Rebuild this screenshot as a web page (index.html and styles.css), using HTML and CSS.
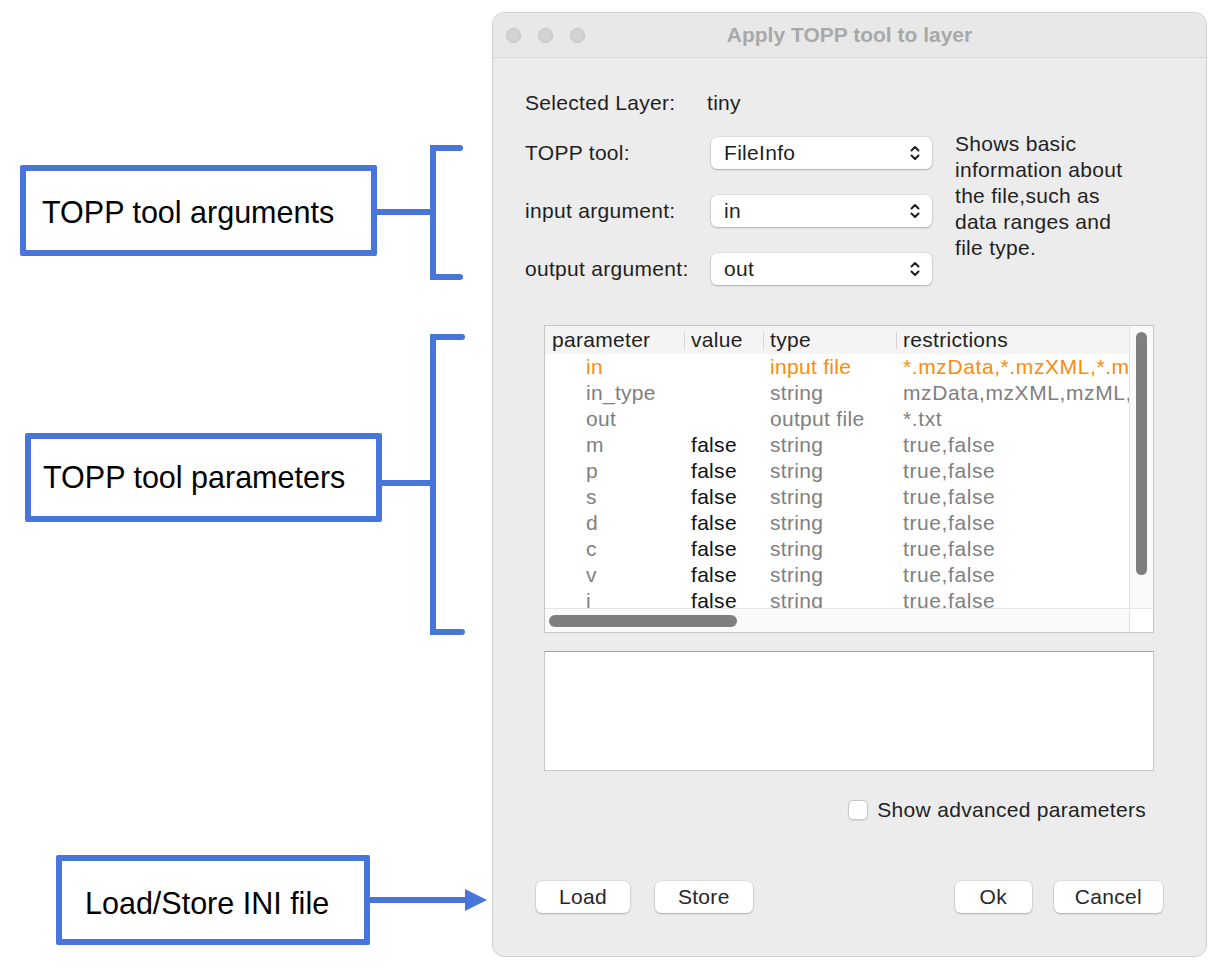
FILE: index.html
```html
<!DOCTYPE html>
<html lang="en">
<head>
<meta charset="utf-8">
<title>Apply TOPP tool to layer</title>
<link rel="stylesheet" href="styles.css">
</head>
<body>
<div class="page">
  <aside class="notes">
    <svg class="leaders" width="492" height="978" viewBox="0 0 492 978" fill="none" stroke="#4775da" stroke-width="6" stroke-linecap="round">
      <path d="M377 212H433M460 148H433V277H460"/>
      <path d="M382 483H433M462 337H433V632H462"/>
      <path d="M370 900H468"/>
      <path d="M465 889L487 900L465 911Z" fill="#4775da" stroke="none"/>
    </svg>
    <div class="note note-args">TOPP tool arguments</div>
    <div class="note note-params">TOPP tool parameters</div>
    <div class="note note-ini">Load/Store INI file</div>
  </aside>

  <section class="dialog">
    <header class="titlebar">
      <div class="lights"><span></span><span></span><span></span></div>
      <h1>Apply TOPP tool to layer</h1>
      <div></div>
    </header>

    <div class="content">
      <div class="layer-row"><span class="lbl">Selected Layer:</span><span>tiny</span></div>

      <div class="tool-grid">
        <span class="lbl">TOPP tool:</span>
        <div class="combo"><span>FileInfo</span><svg class="updown" width="10" height="18" viewBox="0 0 10 18"><path d="M1.5 6.5L5 3L8.5 6.5M1.5 11.5L5 15L8.5 11.5"/></svg></div>
        <span class="lbl">input argument:</span>
        <div class="combo"><span>in</span><svg class="updown" width="10" height="18" viewBox="0 0 10 18"><path d="M1.5 6.5L5 3L8.5 6.5M1.5 11.5L5 15L8.5 11.5"/></svg></div>
        <span class="lbl">output argument:</span>
        <div class="combo"><span>out</span><svg class="updown" width="10" height="18" viewBox="0 0 10 18"><path d="M1.5 6.5L5 3L8.5 6.5M1.5 11.5L5 15L8.5 11.5"/></svg></div>
        <p class="desc">Shows basic<br>information about<br>the file,such as<br>data ranges and<br>file type.</p>
      </div>

      <div class="params">
        <div class="params-view">
          <table>
            <colgroup><col class="c-param"><col class="c-value"><col class="c-type"><col class="c-restr"></colgroup>
            <thead>
              <tr><th>parameter</th><th class="sep">value</th><th class="sep">type</th><th class="sep">restrictions</th></tr>
            </thead>
            <tbody>
              <tr class="req"><td class="name">in</td><td></td><td>input file</td><td class="restr">*.mzData,*.mzXML,*.mzML,*.dta,*.dta2d,*.mgf</td></tr>
              <tr><td class="name">in_type</td><td></td><td>string</td><td class="restr">mzData,mzXML,mzML,dta,dta2d,mgf</td></tr>
              <tr><td class="name">out</td><td></td><td>output file</td><td class="restr">*.txt</td></tr>
              <tr><td class="name">m</td><td class="val">false</td><td>string</td><td class="restr">true,false</td></tr>
              <tr><td class="name">p</td><td class="val">false</td><td>string</td><td class="restr">true,false</td></tr>
              <tr><td class="name">s</td><td class="val">false</td><td>string</td><td class="restr">true,false</td></tr>
              <tr><td class="name">d</td><td class="val">false</td><td>string</td><td class="restr">true,false</td></tr>
              <tr><td class="name">c</td><td class="val">false</td><td>string</td><td class="restr">true,false</td></tr>
              <tr><td class="name">v</td><td class="val">false</td><td>string</td><td class="restr">true,false</td></tr>
              <tr><td class="name">i</td><td class="val">false</td><td>string</td><td class="restr">true,false</td></tr>
            </tbody>
          </table>
        </div>
        <div class="vscroll"><div class="thumb v"></div></div>
        <div class="hscroll"><div class="thumb h"></div></div>
        <div class="corner"></div>
      </div>

      <div class="docbox"></div>

      <label class="adv"><span class="check"></span>Show advanced parameters</label>

      <div class="buttons">
        <div class="group">
          <button class="btn">Load</button>
          <button class="btn">Store</button>
        </div>
        <div class="group right">
          <button class="btn">Ok</button>
          <button class="btn">Cancel</button>
        </div>
      </div>
    </div>
  </section>
</div>
</body>
</html>
```

FILE: styles.css
```css
* { box-sizing: border-box; }

html, body {
  margin: 0;
  background: #ffffff;
}

body {
  width: 1228px;
  height: 978px;
  overflow: hidden;
  font-family: "Liberation Sans", Arial, Helvetica, sans-serif;
}

.page {
  display: flex;
  align-items: flex-start;
}

/* ---- callouts on the left ---- */
.notes {
  position: relative;
  flex: none;
  width: 492px;
  height: 978px;
}

.leaders {
  position: absolute;
  left: 0;
  top: 0;
}

.note {
  position: absolute;
  display: flex;
  align-items: center;
  border: 6px solid #4775da;
  border-radius: 2px;
  background: #ffffff;
  color: #000000;
  font-size: 30.5px;
  white-space: nowrap;
}

.note-args   { left: 20px; top: 165px; width: 357px; height: 91px; padding: 3px 0 0 16px; }
.note-params { left: 25px; top: 433px; width: 357px; height: 89px; padding: 0 0 0 12px; }
.note-ini    { left: 56px; top: 855px; width: 314px; height: 90px; padding: 6px 0 0 23px; }

/* ---- dialog window ---- */
.dialog {
  flex: none;
  width: 715px;
  height: 945px;
  margin-top: 12px;
  display: flex;
  flex-direction: column;
  background: #ececec;
  border: 1px solid #cfcfcf;
  border-radius: 12px;
  overflow: hidden;
  color: #1f1f1f;
  font-size: 21px;
  letter-spacing: 0.3px;
}

.titlebar {
  flex: none;
  height: 45px;
  display: grid;
  grid-template-columns: 1fr auto 1fr;
  align-items: center;
  background: #e8e8e8;
  border-bottom: 1px solid #d6d6d6;
}

.lights {
  display: flex;
  gap: 17px;
  padding-left: 13px;
}

.lights span {
  width: 15px;
  height: 15px;
  border-radius: 50%;
  background: #d3d3d3;
  border: 1px solid #c2c2c2;
}

.titlebar h1 {
  margin: 0;
  font-size: 21px;
  font-weight: bold;
  color: #a9a9a9;
  letter-spacing: 0;
}

.content {
  flex: 1;
  display: flex;
  flex-direction: column;
  padding-top: 29px;
}

.layer-row {
  display: flex;
  align-items: center;
  height: 32px;
  margin-left: 32px;
}

.layer-row .lbl { width: 182px; }

.tool-grid {
  display: grid;
  grid-template-columns: 186px 221px 1fr;
  grid-template-rows: repeat(3, 32px);
  row-gap: 26px;
  margin: 18px 0 0 32px;
  align-items: center;
}

.tool-grid .lbl { grid-column: 1; }

.combo {
  grid-column: 2;
  height: 32px;
  display: flex;
  align-items: center;
  justify-content: space-between;
  padding: 0 12px 0 13px;
  background: #ffffff;
  border-radius: 6px;
  box-shadow: 0 0 0 0.5px rgba(0, 0, 0, 0.12), 0 1px 2px rgba(0, 0, 0, 0.22);
}

.updown path {
  fill: none;
  stroke: #1e1e1e;
  stroke-width: 2;
  stroke-linecap: round;
  stroke-linejoin: round;
}

.desc {
  grid-column: 3;
  grid-row: 1 / 4;
  align-self: start;
  margin: -6px 0 0 23px;
  line-height: 26px;
  white-space: nowrap;
}

/* ---- parameter table ---- */
.params {
  margin: 40px 0 0 51px;
  width: 610px;
  height: 308px;
  flex: none;
  display: grid;
  grid-template-columns: 1fr 24px;
  grid-template-rows: 1fr 24px;
  background: #ffffff;
  border: 1px solid #c6c6c6;
}

.params-view {
  overflow: hidden;
  min-width: 0;
}

.params table {
  border-collapse: collapse;
  table-layout: fixed;
  width: 760px;
}

.c-param { width: 139px; }
.c-value { width: 79px; }
.c-type  { width: 133px; }
.c-restr { width: 409px; }

.params th,
.params td {
  padding: 0 0 0 7px;
  text-align: left;
  white-space: nowrap;
  overflow: hidden;
}

.params th {
  height: 28px;
  font-weight: normal;
  color: #1f1f1f;
  background-color: #f4f4f4;
}

.params th.sep {
  background-image: linear-gradient(#d3d3d3, #d3d3d3);
  background-size: 1px 17px;
  background-position: left center;
  background-repeat: no-repeat;
}

.params td {
  height: 26px;
  color: #808080;
}

.params td.name { padding-left: 41px; }
.params td.val { color: #111111; }
.params td.restr { letter-spacing: 0.6px; }
.params tr.req td { color: #f98c0f; }

.vscroll {
  grid-column: 2;
  grid-row: 1;
  background: #fafafa;
  border-left: 1px solid #e4e4e4;
  padding: 6px 0 0 6px;
}

.hscroll {
  grid-column: 1;
  grid-row: 2;
  background: #fafafa;
  border-top: 1px solid #e4e4e4;
  padding: 6px 0 0 4px;
}

.corner {
  grid-column: 2;
  grid-row: 2;
  background: #ffffff;
  border-left: 1px solid #e4e4e4;
  border-top: 1px solid #e4e4e4;
}

.thumb {
  background: #7f7f7f;
  border-radius: 6px;
}

.thumb.v { width: 11px; height: 243px; }
.thumb.h { width: 188px; height: 12px; }

/* ---- description box ---- */
.docbox {
  flex: none;
  margin: 18px 0 0 51px;
  width: 610px;
  height: 120px;
  background: #ffffff;
  border: 1px solid #c9c9c9;
  border-top-color: #a2a2a2;
}

/* ---- advanced toggle ---- */
.adv {
  display: flex;
  align-items: center;
  justify-content: flex-end;
  gap: 9px;
  height: 22px;
  margin-top: 28px;
  padding-right: 60px;
}

.check {
  width: 20px;
  height: 20px;
  background: #ffffff;
  border: 1px solid #c6c6c6;
  border-radius: 5px;
  box-shadow: 0 0.5px 1px rgba(0, 0, 0, 0.08);
}

/* ---- bottom buttons ---- */
.buttons {
  display: flex;
  justify-content: space-between;
  margin-top: 60px;
  padding: 0 43px;
}

.group {
  display: flex;
  gap: 25px;
}

.group .btn { padding: 0 23px; }

.group.right { gap: 22px; }

.group.right .btn { padding: 0 21px; }

.btn {
  height: 32px;
  min-width: 77px;
  font: inherit;
  letter-spacing: inherit;
  color: #262626;
  background: #ffffff;
  border: none;
  border-radius: 6px;
  box-shadow: 0 0 0 0.5px rgba(0, 0, 0, 0.12), 0 1px 2px rgba(0, 0, 0, 0.22);
}
```
